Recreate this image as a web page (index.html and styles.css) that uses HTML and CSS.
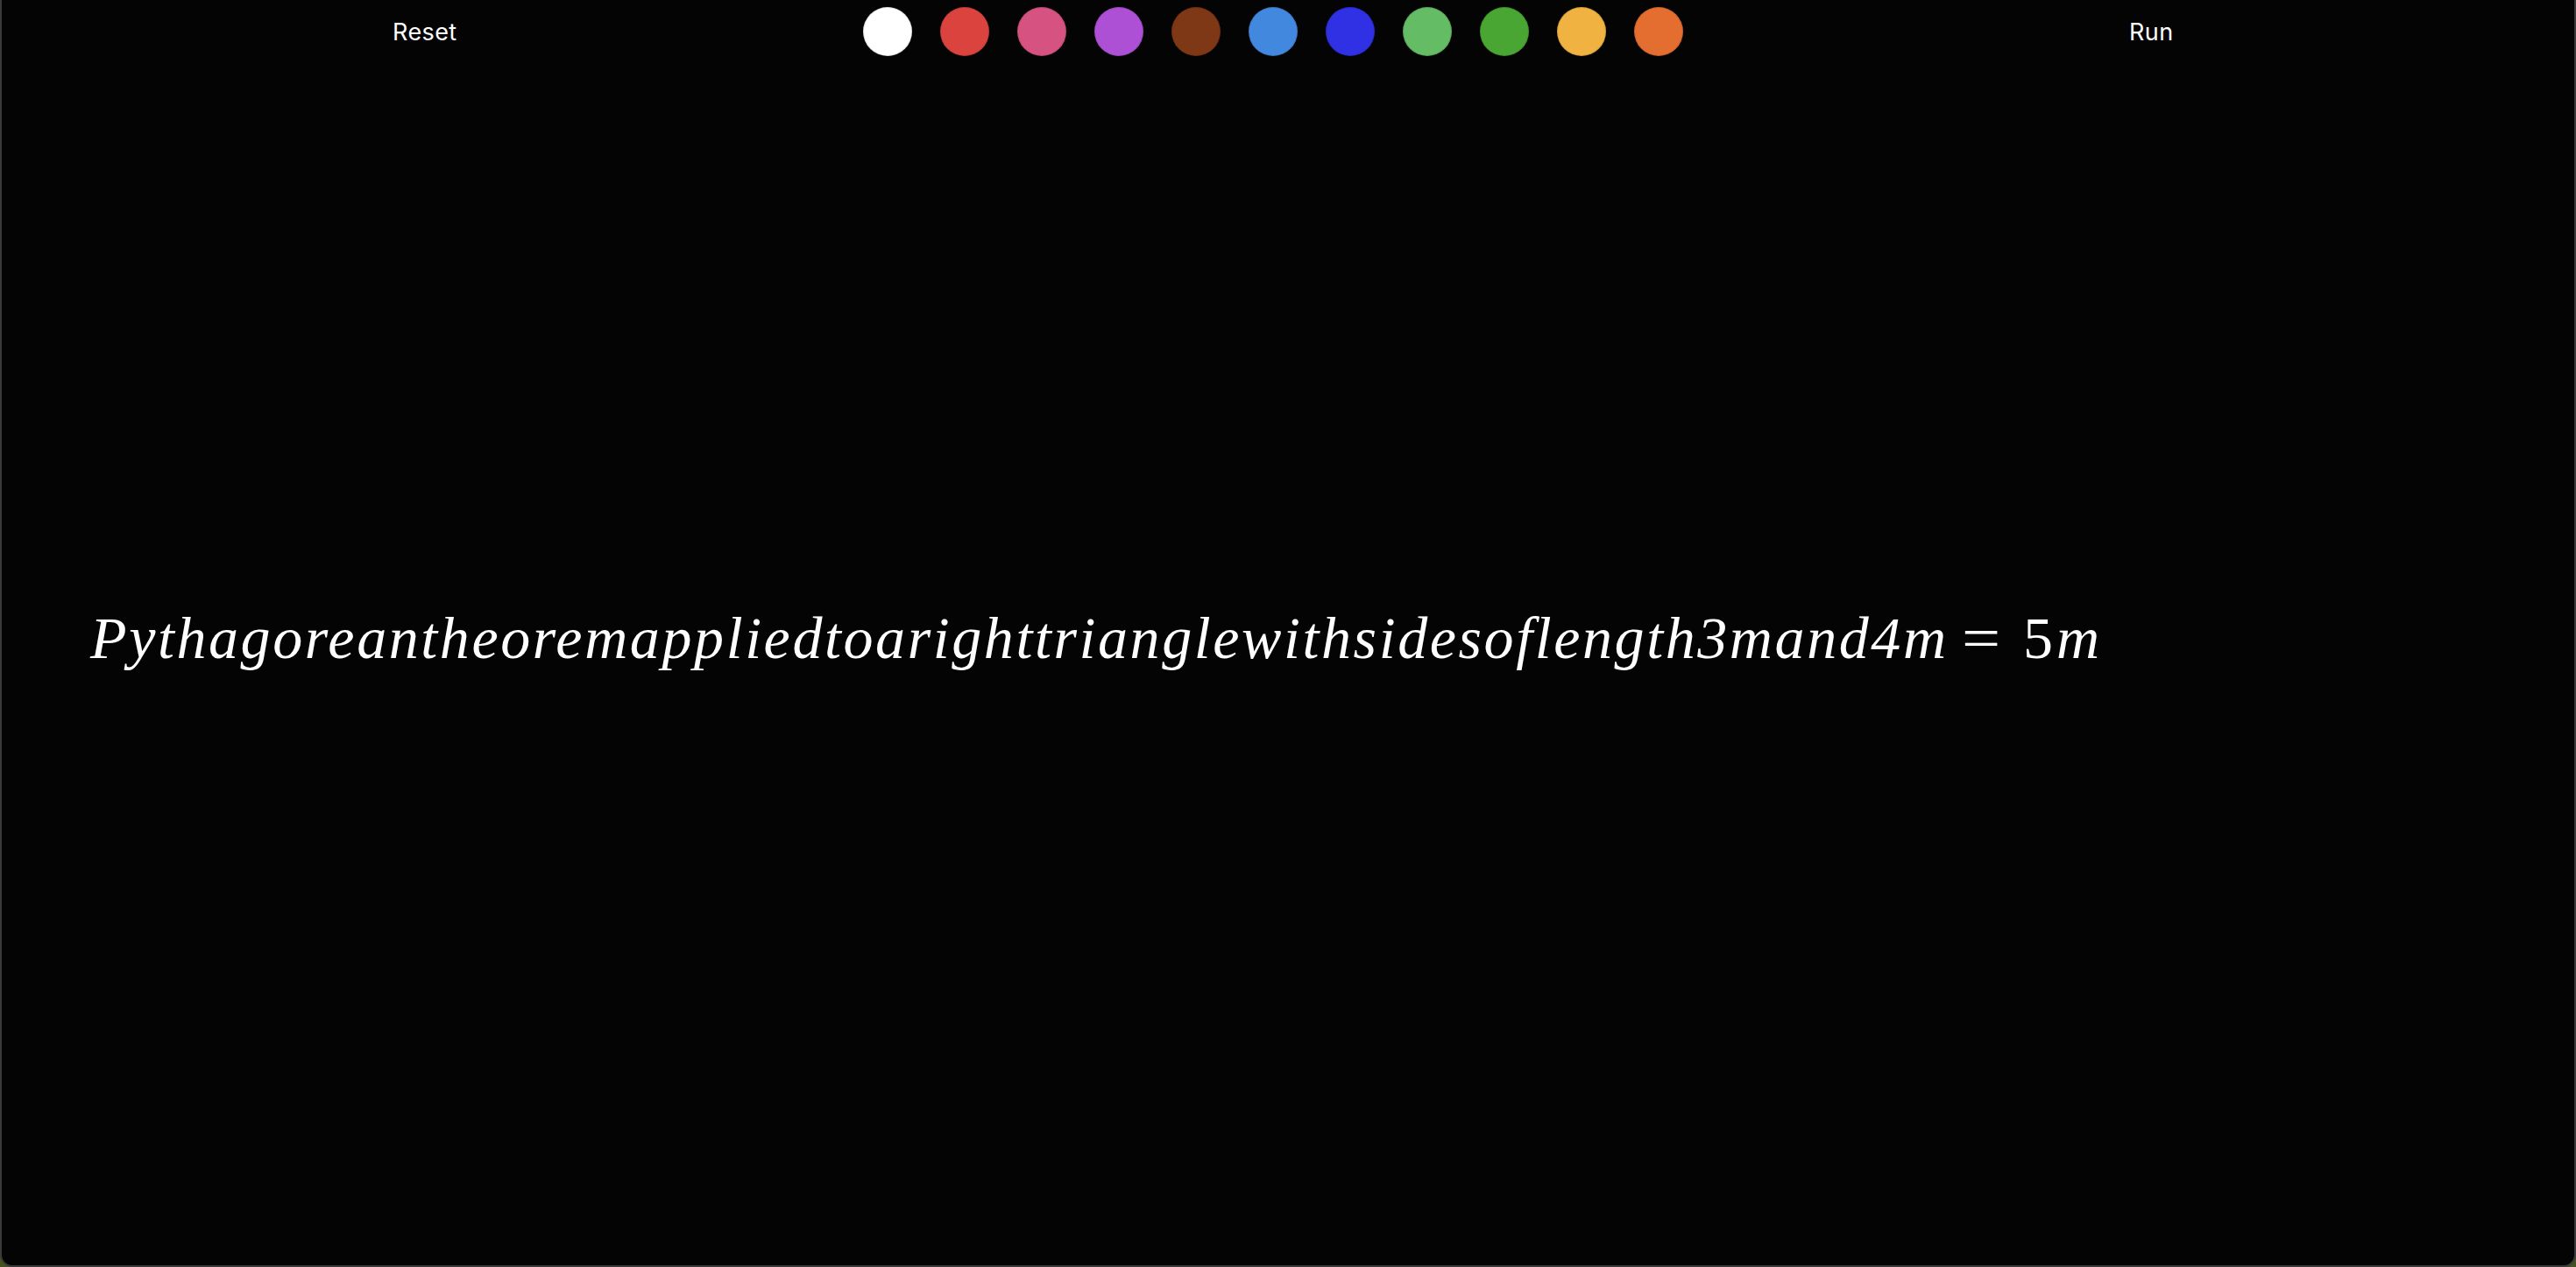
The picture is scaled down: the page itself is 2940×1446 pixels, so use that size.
FILE: index.html
```html
<!DOCTYPE html>
<html>
<head>
<meta charset="utf-8">
<link rel="stylesheet" href="styles.css">
</head>
<body>
<div class="app">
  <div class="toolbar">
    <button class="btn reset">Reset</button>
    <div class="swatches">
      <span class="swatch c-white"></span>
      <span class="swatch c-red"></span>
      <span class="swatch c-pink"></span>
      <span class="swatch c-purple"></span>
      <span class="swatch c-brown"></span>
      <span class="swatch c-blue"></span>
      <span class="swatch c-indigo"></span>
      <span class="swatch c-lgreen"></span>
      <span class="swatch c-green"></span>
      <span class="swatch c-yellow"></span>
      <span class="swatch c-orange"></span>
    </div>
    <button class="btn run">Run</button>
  </div>
  <div class="stage">
    <div class="math"><span class="mi">Pythagoreantheoremappliedtoarighttrianglewithsidesoflength3mand4m</span><span class="mo">=</span><span class="mn">5</span><span class="mi last">m</span></div>
  </div>
</div>
</body>
</html>
```
FILE: styles.css
```css
html, body {
  margin: 0;
  padding: 0;
}
body {
  background: #46521e;
  width: 2940px;
  height: 1446px;
  overflow: hidden;
}
.app {
  box-sizing: border-box;
  width: 2940px;
  height: 1446px;
  background: #040404;
  border-left: 2px solid #3a3a3a;
  border-right: 2px solid #3a3a3a;
  border-bottom: 2px solid #3a3a3a;
  border-radius: 0 0 14px 14px;
  overflow: hidden;
}
.toolbar {
  height: 72px;
  display: flex;
  align-items: center;
  padding-left: 446px;
}
.btn {
  background: none;
  border: none;
  padding: 0;
  margin: 0;
  color: #ffffff;
  font-family: Inter, "Liberation Sans", sans-serif;
  font-size: 27px;
  letter-spacing: 0.4px;
  line-height: 1;
  cursor: pointer;
}
.reset {
  width: 73px;
  text-align: left;
}
.swatches {
  display: flex;
  gap: 32px;
  margin-left: 464px;
}
.swatch {
  width: 56px;
  height: 56px;
  border-radius: 50%;
  box-shadow: inset 0 0 0 1px rgba(0, 0, 0, 0.12);
}
.run {
  margin-left: 509px;
}
.c-white { background: #ffffff; }
.c-red { background: #db443e; }
.c-pink { background: #d65280; }
.c-purple { background: #ae50d6; }
.c-brown { background: #7f3816; }
.c-blue { background: #4288de; }
.c-indigo { background: #3030e4; }
.c-lgreen { background: #64bc64; }
.c-green { background: #4aa632; }
.c-yellow { background: #f0b240; }
.c-orange { background: #e46e30; }
.stage {
  padding-top: 622px;
  padding-left: 101px;
}
.math {
  color: #ffffff;
  font-family: "Liberation Serif", serif;
  font-size: 68px;
  line-height: 1;
  white-space: nowrap;
}
.mi {
  font-style: italic;
  letter-spacing: 2.6px;
}
.mi.last {
  letter-spacing: 0;
}
.mo {
  display: inline-block;
  margin: 0 29px 0 18px;
  transform: scaleX(1.15);
}
.mn {
  margin-right: 4px;
}
```
